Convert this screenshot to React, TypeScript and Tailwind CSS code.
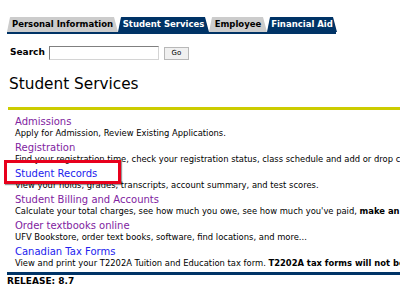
const TABS = [
  { label: 'Personal Information', w: 'w-[111px]', active: false },
  { label: 'Student Services', w: 'w-[91px]', active: true },
  { label: 'Employee', w: 'w-[58px]', active: false },
  { label: 'Financial Aid', w: 'w-[70px]', active: true },
]

const LINKS = [
  {
    title: 'Admissions',
    visited: true,
    desc: <>Apply for Admission, Review Existing Applications.</>,
  },
  {
    title: 'Registration',
    visited: true,
    desc: <>Find your registration time, check your registration status, class schedule and add or drop classes</>,
  },
  {
    title: 'Student Records',
    visited: false,
    desc: <>View your holds, grades, transcripts, account summary, and test scores.</>,
  },
  {
    title: 'Student Billing and Accounts',
    visited: true,
    desc: (
      <>
        Calculate your total charges, see how much you owe, see how much you've paid, <b>make an online payment</b>
      </>
    ),
  },
  {
    title: 'Order textbooks online',
    visited: true,
    desc: <>UFV Bookstore, order text books, software, find locations, and more...</>,
  },
  {
    title: 'Canadian Tax Forms',
    visited: false,
    desc: (
      <>
        View and print your T2202A Tuition and Education tax form. <b>T2202A tax forms will not be mailed to students.</b>
      </>
    ),
  },
]

export default function App() {
  return (
    <div className="relative h-[295px] w-[400px] overflow-hidden bg-white font-['DejaVu_Sans',Verdana,sans-serif] text-black">
      {/* tabs */}
      <div className="flex pl-[7px] pt-[17px]">
        {TABS.map((t) => (
          <div
            key={t.label}
            className={`${t.w} flex h-[15px] items-center justify-center rounded-t-[4px] pb-[1px] text-[8.5px] font-bold whitespace-nowrap [clip-path:polygon(3px_0,calc(100%-4px)_0,100%_100%,0_100%)] ${
              t.active ? 'bg-[#003366] text-white' : 'bg-[#cccccc] text-black'
            }`}
          >
            {t.label}
          </div>
        ))}
      </div>
      <div className="ml-[7px] h-[2px] w-[329px] bg-[#003366]" />

      {/* search */}
      <div className="mt-[12px] flex items-center pl-[10px]">
        <span className="text-[9px] font-bold">Search</span>
        <div className="ml-[4px] h-[14px] w-[110px] border border-t-[#808080] border-l-[#808080] border-r-[#d4d4d4] border-b-[#d4d4d4] bg-white" />
        <div className="ml-[5px] flex h-[13px] w-[25px] items-center justify-center border border-[#b8b8b8] bg-[#f0f0f0] text-[7px]">
          Go
        </div>
      </div>

      {/* heading */}
      <h1 className="mt-[15px] pl-[9px] text-[15.3px] leading-[18px] font-normal">Student Services</h1>

      <div className="mt-[14px] ml-[8px] h-[3px] bg-[#cccc00]" />

      {/* menu */}
      <div className="mt-[5px] pl-[15px]">
        {LINKS.map((l) => (
          <div key={l.title} className="h-[26px] whitespace-nowrap">
            <div className={`text-[10px] leading-[14px] ${l.visited ? 'text-[#80239f]' : 'text-[#2222ee]'}`}>{l.title}</div>
            <div className="-mt-[1px] text-[8.4px] leading-[11px]">{l.desc}</div>
          </div>
        ))}
      </div>

      <div className="mt-[1px] ml-[7px] h-[3px] bg-[#003366]" />
      <div className="mt-[1px] pl-[7px] text-[9px] leading-[11px] font-bold">RELEASE: 8.7</div>

      {/* highlight box */}
      <div className="absolute top-[160px] left-[4px] h-[24px] w-[117px] border-[3px] border-[#e8001c] shadow-[1px_1px_1px_rgba(0,0,0,0.4)]" />
    </div>
  )
}
